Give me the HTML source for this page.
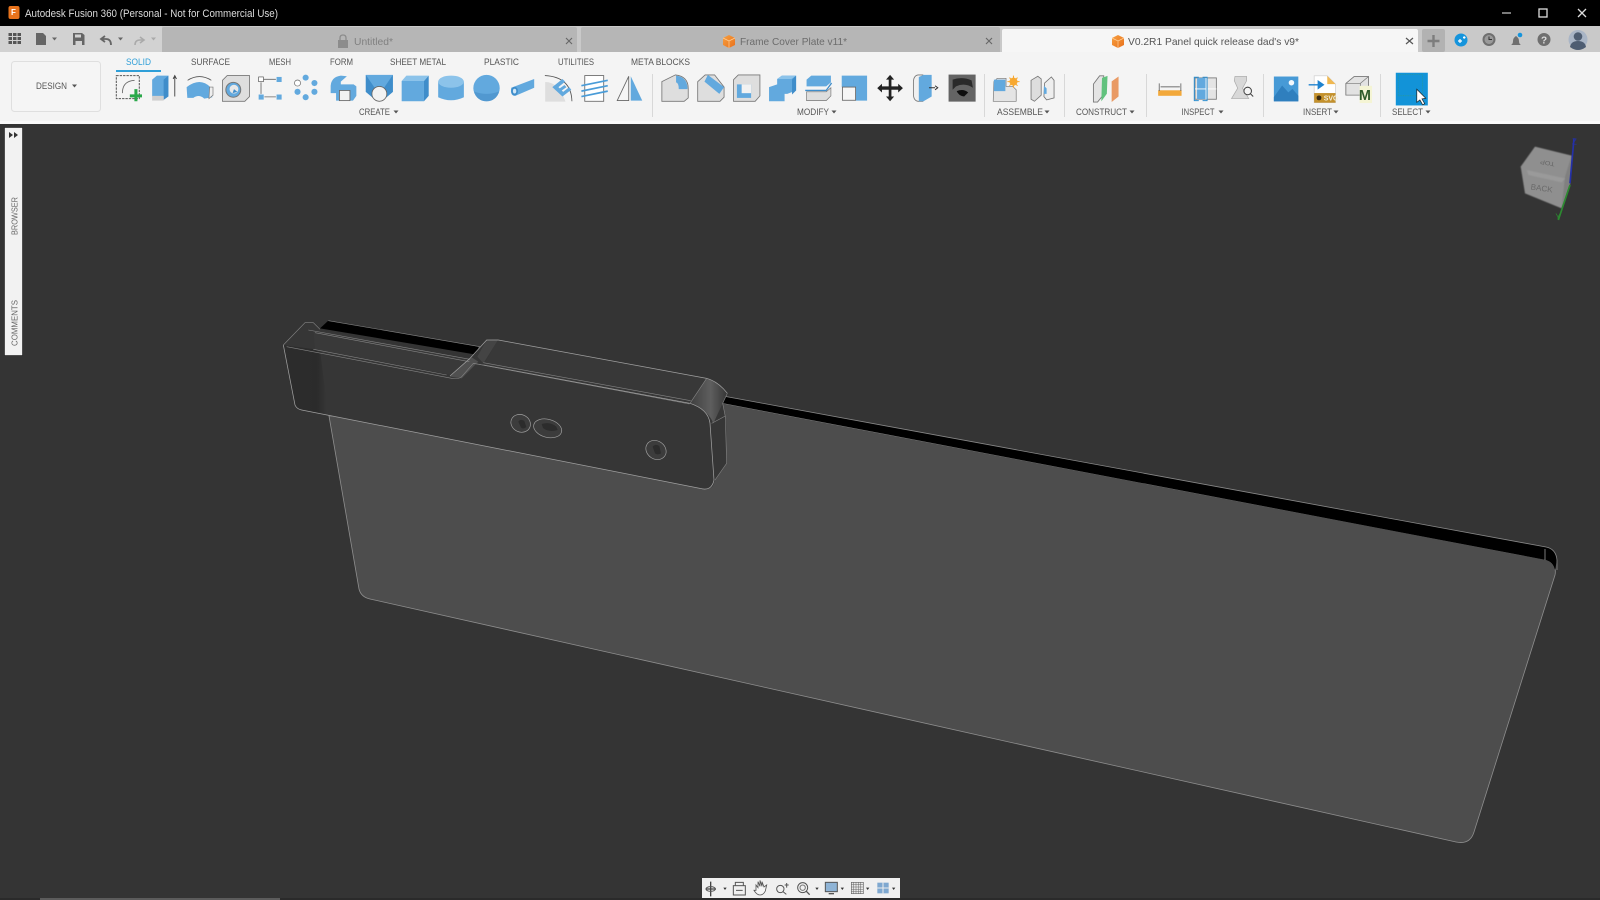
<!DOCTYPE html>
<html><head><meta charset="utf-8"><title>Autodesk Fusion 360</title>
<style>
html,body{margin:0;padding:0;width:1600px;height:900px;overflow:hidden;background:#343434}
svg{display:block;position:absolute;left:0;top:0;filter:blur(.35px)}
text{font-family:"Liberation Sans",sans-serif}
.t{font-size:9.5px;fill:#555}
.g{stroke:#777;stroke-width:2.5;fill:#dedede}
.b{fill:#62a9de}.d{fill:#3f8dca}.l{fill:#8cc3ea}
.e{fill:none;stroke:#a0a0a0;stroke-width:2.2}
.e2{fill:none;stroke:#858585;stroke-width:1.8}
</style></head><body>
<svg width="1600" height="900" viewBox="0 0 1600 900" xmlns="http://www.w3.org/2000/svg">
<defs>
<linearGradient id="endg" x1="0" x2="1" y1="0" y2="0"><stop offset="0" stop-color="#2d2d2d"/><stop offset=".75" stop-color="#2b2b2b"/><stop offset="1" stop-color="#383838"/></linearGradient>
<linearGradient id="fil" x1="0" x2="1" y1="0" y2="0"><stop offset="0" stop-color="#3f3f3f"/><stop offset=".55" stop-color="#5e5e5e"/><stop offset="1" stop-color="#363636"/></linearGradient>
<linearGradient id="cube" x1="0" x2="1" y1="0" y2="1"><stop offset="0" stop-color="#f7a040"/><stop offset="1" stop-color="#e8701c"/></linearGradient>
<filter id="soft"><feGaussianBlur stdDeviation="1.8"/></filter>
</defs>
<rect width="1600" height="900" fill="#343434"/>
<rect width="1600" height="26" fill="#000"/>
<rect y="26" width="1600" height="26" fill="#c9c9c9"/>
<rect y="26" width="162" height="26" fill="#d2d2d2"/>
<rect y="52" width="1600" height="69" fill="#f4f4f4"/>
<rect y="121" width="1600" height="3" fill="#fafafa"/>
<!-- title bar -->
<rect x="8.500" y="6" width="11" height="13" rx="2" fill="#e8731c"/><text x="11" y="15" font-size="8" font-weight="bold" fill="#fff">F</text>
<text x="25" y="17" font-size="11" fill="#dcdcdc" textLength="253" lengthAdjust="spacingAndGlyphs">Autodesk Fusion 360 (Personal - Not for Commercial Use)</text>
<path d="M1502 13h9" stroke="#bbb" stroke-width="1.300"/>
<rect x="1539" y="9" width="8" height="8" fill="none" stroke="#ddd" stroke-width="1.300"/>
<path d="M1578 9l8 8M1586 9l-8 8" stroke="#ddd" stroke-width="1.300"/>
<!-- tabs -->
<g transform="translate(0,-1)">
<path d="M162 53V30q0-2 2-2H575q2 0 2 2V53Z" fill="#b6b6b6"/>
<path d="M581 53V30q0-2 2-2H998q2 0 2 2V53Z" fill="#b6b6b6"/>
<path d="M1002 53V32q0-2 2-2H1416q2 0 2 2V53Z" fill="#f6f6f6"/>
<rect x="1422" y="30" width="23" height="23" rx="2" fill="#b2b2b2"/>
<path d="M1433.500 36v12M1427.500 42h12" stroke="#7d7d7d" stroke-width="2.400"/>
<rect x="338" y="41" width="10" height="8" fill="#8c8c8c"/><path d="M340 41v-2q0-3 3-3t3 3v2" fill="none" stroke="#8c8c8c" stroke-width="1.300"/>
<text x="354" y="46" font-size="10" fill="#808080" textLength="39" lengthAdjust="spacingAndGlyphs">Untitled*</text>
<path d="M566 39l6 6M572 39l-6 6" stroke="#666" stroke-width="1.100"/>
<path d="M729 36l6 3v7l-6 3-6-3v-7z" fill="url(#cube)"/><path d="M723 39l6 3 6-3M729 42v7" stroke="#ffd09a" stroke-width=".7" fill="none"/>
<text x="740" y="46" font-size="10.500" fill="#6c6c6c" textLength="107" lengthAdjust="spacingAndGlyphs">Frame Cover Plate v11*</text>
<path d="M986 39l6 6M992 39l-6 6" stroke="#666" stroke-width="1.100"/>
<path d="M1118 36l6 3v7l-6 3-6-3v-7z" fill="url(#cube)"/><path d="M1112 39l6 3 6-3M1118 42v7" stroke="#ffd09a" stroke-width=".7" fill="none"/>
<text x="1128" y="46" font-size="10.500" fill="#555" textLength="171" lengthAdjust="spacingAndGlyphs">V0.2R1 Panel quick release dad's v9*</text>
<path d="M1406 39l7 6M1413 39l-7 6" stroke="#555" stroke-width="1.200"/>
<!-- top right icons -->
<circle cx="1461" cy="41" r="6.500" fill="#1594dc"/><path d="M1458 42h4M1460 40v4M1463 38.500h2.500M1464.200 37.300v2.500" stroke="#fff" stroke-width="1.200"/>
<circle cx="1489" cy="40.500" r="6.500" fill="#6f6f6f"/><circle cx="1489" cy="40.500" r="4.500" fill="#9a9a9a"/><path d="M1489 37.500v3h3" stroke="#333" fill="none"/>
<path d="M1511 46q2-1 2-4t3-5q3 2 3 5t2 4z" fill="#6f6f6f"/><circle cx="1520" cy="36" r="2.300" fill="#1594dc"/>
<circle cx="1544" cy="40.500" r="6.500" fill="#6f6f6f"/><text x="1541" y="44.500" font-size="10" font-weight="bold" fill="#ddd">?</text>
<circle cx="1578" cy="40.500" r="9.500" fill="#a9b5c6"/><circle cx="1578" cy="37.500" r="4.300" fill="#4e5d72"/><path d="M1570 48q1-6 8-6t8 6q-4 3-8 3t-8-3z" fill="#4e5d72"/>
</g>
<!-- quick access -->
<g>
<g fill="#555"><rect x="8.500" y="33" width="3.500" height="3"/><rect x="13" y="33" width="3.500" height="3"/><rect x="17.500" y="33" width="3.500" height="3"/><rect x="8.500" y="37" width="3.500" height="3"/><rect x="13" y="37" width="3.500" height="3"/><rect x="17.500" y="37" width="3.500" height="3"/><rect x="8.500" y="41" width="3.500" height="3"/><rect x="13" y="41" width="3.500" height="3"/><rect x="17.500" y="41" width="3.500" height="3"/></g>
<path d="M36 33h7l3 3v9H36z" fill="#666"/><path d="M52 37.500h5l-2.500 3z" fill="#666"/>
<path d="M73 33h9l2.500 2v10H73z" fill="#666"/><rect x="75" y="34.500" width="6" height="3" fill="#d2d2d2"/><rect x="75.500" y="41" width="6.500" height="4" fill="#d2d2d2"/>
<path d="M111 45q0-6-5-6h-4M105 36l-4 3 4 3" fill="none" stroke="#666" stroke-width="1.800"/><path d="M118 37.500h5l-2.500 3z" fill="#666"/>
<path d="M135 45q0-5 5-5h3M140 37l4 3-4 3" fill="none" stroke="#aaa" stroke-width="1.600"/><path d="M151 37.500h5l-2.500 3z" fill="#aaa"/>
</g>
<!-- design box -->
<rect x="11.500" y="61.500" width="89" height="50" rx="3" fill="#f5f5f5" stroke="#dfdfdf"/>
<text x="36" y="89" font-size="9.500" fill="#555" textLength="31" lengthAdjust="spacingAndGlyphs">DESIGN</text>
<path d="M72 84.500h5l-2.500 3z" fill="#555"/>
<!-- tab labels -->
<text x="126" y="65" class="t" style="fill:#2f9fd8" textLength="25" lengthAdjust="spacingAndGlyphs">SOLID</text>
<rect x="116" y="70" width="45" height="2" fill="#2f9fd8"/>
<text x="191" y="65" class="t" textLength="39" lengthAdjust="spacingAndGlyphs">SURFACE</text>
<text x="269" y="65" class="t" textLength="22" lengthAdjust="spacingAndGlyphs">MESH</text>
<text x="330" y="65" class="t" textLength="23" lengthAdjust="spacingAndGlyphs">FORM</text>
<text x="390" y="65" class="t" textLength="56" lengthAdjust="spacingAndGlyphs">SHEET METAL</text>
<text x="484" y="65" class="t" textLength="35" lengthAdjust="spacingAndGlyphs">PLASTIC</text>
<text x="558" y="65" class="t" textLength="36" lengthAdjust="spacingAndGlyphs">UTILITIES</text>
<text x="631" y="65" class="t" textLength="59" lengthAdjust="spacingAndGlyphs">META BLOCKS</text>
<!-- group labels -->
<text x="359" y="115" class="t" textLength="31" lengthAdjust="spacingAndGlyphs">CREATE</text><path d="M393.500 110.500h5l-2.500 3z" fill="#555"/>
<text x="797" y="115" class="t" textLength="32" lengthAdjust="spacingAndGlyphs">MODIFY</text><path d="M831.500 110.500h5l-2.500 3z" fill="#555"/>
<text x="997" y="115" class="t" textLength="46" lengthAdjust="spacingAndGlyphs">ASSEMBLE</text><path d="M1044.500 110.500h5l-2.500 3z" fill="#555"/>
<text x="1076" y="115" class="t" textLength="51" lengthAdjust="spacingAndGlyphs">CONSTRUCT</text><path d="M1129.500 110.500h5l-2.500 3z" fill="#555"/>
<text x="1181.500" y="115" class="t" textLength="33" lengthAdjust="spacingAndGlyphs">INSPECT</text><path d="M1218.500 110.500h5l-2.500 3z" fill="#555"/>
<text x="1303" y="115" class="t" textLength="29" lengthAdjust="spacingAndGlyphs">INSERT</text><path d="M1333.500 110.500h5l-2.500 3z" fill="#555"/>
<text x="1392" y="115" class="t" textLength="31" lengthAdjust="spacingAndGlyphs">SELECT</text><path d="M1425.500 110.500h5l-2.500 3z" fill="#555"/>
<!-- separators -->
<path d="M652.500 74v43M984.500 74v43M1064.500 74v43M1146.500 74v43M1263.500 74v43M1380.500 74v43" stroke="#d8d8d8"/>
<!-- icons section 1 -->
<g transform="translate(0,-1.500) scale(.3381)">
<rect x="344" y="228" width="68" height="68" fill="none" stroke="#555" stroke-width="3" stroke-dasharray="7 3"/>
<path d="M362 280q0-36 36-38" fill="none" stroke="#666" stroke-width="2.500"/>
<path d="M402 268v36M384 288h36" stroke="#2aa84a" stroke-width="9"/>
<path d="M450 240l14-12h34v62l-14 0H450z" class="b"/><path d="M484 240l14-12v62l-14 10z" class="d"/><rect x="450" y="288" width="34" height="14" fill="#cfcfcf"/>
<path d="M517 290v-58M512 238l5-10 5 10" stroke="#333" stroke-width="2.500" fill="none"/>
<path d="M552 262q40-30 70 0l6 30-24 4q-16-14-32-2l-18 0z" class="b"/><path d="M620 262l10 0v24l-12 10z" fill="#eee" stroke="#777" stroke-width="2"/><path d="M555 242q35-22 70 0" fill="none" stroke="#555" stroke-width="2.500"/>
<path d="M658 242l14-14h66v62l-14 14h-66z" class="g"/><circle cx="690" cy="270" r="22" class="b" stroke="#777" stroke-width="3"/><circle cx="692" cy="268" r="13" fill="#e8e8e8"/><path d="M692 268l10 8-14 4z" class="d"/>
<rect x="765" y="232" width="14" height="14" fill="#fff" stroke="#555" stroke-width="2"/><rect x="818" y="232" width="15" height="15" class="b"/><rect x="765" y="284" width="15" height="15" class="b"/><rect x="818" y="284" width="15" height="15" class="b"/><path d="M780 239h36M772 248v34M782 291h34" stroke="#666" stroke-width="2.500"/>
<circle cx="880" cy="250" r="9" fill="#fff" stroke="#666" stroke-width="2"/><circle cx="904" cy="234" r="9" class="b"/><circle cx="930" cy="250" r="9" class="b"/><circle cx="930" cy="276" r="9" class="b"/><circle cx="904" cy="292" r="9" class="b"/><circle cx="880" cy="276" r="9" class="b"/>
<path d="M978 258q2-26 30-30l18 2-18 16v8h38l8 6v28l-10 14h-50v-22h-16z" class="b"/><rect x="1004" y="272" width="31" height="30" fill="#f2f2f2" stroke="#666" stroke-width="2.500"/>
<path d="M1082 226h80v50l-28 24h-24l-28-24z" class="b"/><path d="M1082 226l30 44-4 28-26-22z M1162 226l-30 44 4 28 26-22z" class="d"/><circle cx="1122" cy="282" r="22" fill="#f2f2f2" stroke="#666" stroke-width="2.500"/>
<path d="M1188 244l14-16h66l-14 16z" class="l"/><path d="M1188 244h66v60h-66z" class="b"/><path d="M1254 244l14-16v60l-14 16z" class="d"/>
<path d="M1296 246v46q38 18 76 0v-46z" class="b"/><ellipse cx="1334" cy="246" rx="38" ry="18" class="l"/>
<circle cx="1439" cy="265" r="39" class="b"/><path d="M1402 275q37 14 74 0q-8 28-37 29q-29-1-37-29z" fill="#5198d0"/>
<path d="M1512 264l68-26v26l-56 24q-16 0-12-24z" class="b"/><ellipse cx="1522" cy="274" rx="10" ry="13" class="d"/><ellipse cx="1522" cy="274" rx="5" ry="7" fill="#d0e6f6"/>
</g>
<!-- icons section 2 -->
<g transform="translate(530,-1.500) scale(.3381)">
<path d="M45 305v-58q40 0 60 58z" fill="#dedede"/><path d="M44 228q78 4 80 76" fill="none" stroke="#555" stroke-width="2.500"/>
<path d="M66 262l30-24 8 8-20 16 4 4 14-10 6 6-14 10 4 4 18-14 6 8-26 20z" class="b"/>
<rect x="162" y="228" width="56" height="76" fill="#fff" stroke="#666" stroke-width="2.500"/><path d="M152 258l78-16M152 274l78-16M152 290l78-16" stroke="#4a9cd8" stroke-width="5"/>
<path d="M258 302l34-72v72z" fill="#f5f5f5" stroke="#666" stroke-width="2.500"/><path d="M298 230l34 72h-34z" class="b"/>
<path d="M390 246l40-20q38 4 38 40v28l-12 10h-66z" fill="#dedede" stroke="#777" stroke-width="2.500"/><path d="M432 228q34 4 34 40l-26 0q0-18-8-20z" class="b"/>
<path d="M496 246l22-20h28l28 36v30l-12 12h-66z" fill="#dedede" stroke="#777" stroke-width="2.500"/><path d="M526 226l48 36-14 20-44-36z" class="b"/>
<path d="M602 240l14-14h64v62l-14 16h-64z" class="g"/><path d="M612 254h42v40h-42z" class="b"/><path d="M626 254h28v26h-28z" fill="#f2f2f2"/>
<path d="M707 262l24-8v-16l14-10h42v44l-26 10h-8v22h-46z" class="b"/><path d="M731 238l14-10h42l-14 10z" class="l"/><path d="M775 240l12-12v44l-12 12z" class="d"/>
<path d="M818 240l14-12h58v20l-14 12h-58z" class="b"/><path d="M818 276h58l14-12v24l-14 14h-58z" fill="#dedede" stroke="#777" stroke-width="2"/><path d="M814 272h62l16-22" fill="none" stroke="#3f8dca" stroke-width="4"/>
<path d="M922 228h75v74h-34v-40h-41z" class="b"/><rect x="924" y="262" width="39" height="39" fill="#f6f6f6" stroke="#666" stroke-width="2.500"/>
<path d="M1065 226l-12 14h8v20h-20v-8l-14 13 14 13v-8h20v20h-8l12 14 12-14h-8v-20h20v8l14-13-14-13v8h-20v-20h8z" fill="#222"/>
<path d="M1134 248q0-20 14-22h14v78h-14q-14-2-14-22z" fill="#f0f0f0" stroke="#777" stroke-width="2.500"/><path d="M1150 232l14-6h24v64l-24 14h-14z" class="b"/><path d="M1180 264h18M1198 258l8 6-8 6" stroke="#333" stroke-width="3" fill="none"/>
<rect x="1238" y="225" width="80" height="80" fill="#646464"/><path d="M1250 240q28-10 56 2l4 22q-24-16-50-4l-10 10z" fill="#2a2a2a"/><path d="M1262 274q20-8 34 4l-12 12q-16-2-22-16z" fill="#0e0e0e"/>
<path d="M1372 246l10-10h26v24h20l10 10v34h-68z" fill="#e4e4e4" stroke="#777" stroke-width="2"/><rect x="1372" y="240" width="34" height="34" class="b"/>
<circle cx="1430" cy="246" r="12" fill="#f7a830"/><path d="M1430 228v36M1412 246h36M1418 234l24 24M1442 234l-24 24" stroke="#f7a830" stroke-width="3"/>
<path d="M1482 298v-56l20-12 10 8v48l-20 18z" fill="#ddd" stroke="#777" stroke-width="2.500"/><path d="M1522 250l20-18 8 10v52l-22 6-8-10z" fill="#eee" stroke="#777" stroke-width="2.500"/><path d="M1520 258l8 8v16h-8z" class="b"/>
</g>
<!-- icons section 3 -->
<g transform="translate(1060,-2) scale(.3444)">
<path d="M97 250l18-24h12v54l-18 22h-12z" fill="#e4e4e4" stroke="#777" stroke-width="2.500"/><path d="M122 232l16-6-2 52-16 22z" fill="#62c27e"/><path d="M150 242l20-14v58l-20 16z" fill="#e99a64"/>
<rect x="285" y="268" width="68" height="16" fill="#f2a83a"/><path d="M288 270v-22M351 270v-22M292 258h56" stroke="#444" stroke-width="2"/>
<rect x="392" y="232" width="62" height="62" fill="#e4e4e4" stroke="#777" stroke-width="2.500"/><rect x="398" y="232" width="26" height="62" class="b"/><path d="M424 232v62M392 264h62" stroke="#fff" stroke-width="2.500"/><path d="M403 230h-13v68h13M414 230h13v68h-13" fill="none" stroke="#2f8fd0" stroke-width="3"/>
<path d="M508 228h34v12l-12 22 18 30H498l18-30-10-22z" fill="#d8d8d8" stroke="#aaa" stroke-width="2"/><circle cx="545" cy="270" r="11" fill="#f4f4f4" stroke="#444" stroke-width="3"/><path d="M553 278l8 8" stroke="#444" stroke-width="3"/>
<rect x="621" y="228" width="71" height="72" fill="#479ad6"/><circle cx="672" cy="246" r="8" fill="#f4f8fc"/><path d="M621 288l24-34 18 20 12-10 17 20v16h-71z" fill="#2f7fbe"/>
<path d="M738 226h38l24 24v54H738z" fill="#fff" stroke="#ccc" stroke-width="2"/><path d="M776 226l24 24h-24z" fill="#f0b850"/><rect x="738" y="276" width="62" height="28" fill="#c4912c"/><text x="766" y="298" font-size="20" font-weight="bold" fill="#f4f0e0">SVG</text><circle cx="752" cy="290" r="7" fill="#3a2a10"/><path d="M722 250h26v-12l20 14-20 14v-12h-26z" fill="#1f83cf"/>
<path d="M830 248l24-20h42v54H830z" fill="#e2e2e2" stroke="#777" stroke-width="2.500"/><path d="M830 248h42l24-20M872 248v34" fill="none" stroke="#777" stroke-width="2"/><rect x="870" y="255" width="36" height="50" fill="#f4f4d4"/><text x="868" y="296" font-size="42" font-weight="bold" fill="#2f5c2a">M</text>
<rect x="975" y="217" width="93" height="95" fill="#1293d8"/><rect x="982" y="222" width="70" height="62" fill="none" stroke="#2f9a8a" stroke-width="1.500" stroke-dasharray="3 2"/>
<path d="M1036 265v38l9-7 8 14 6-3-8-14 11-2z" fill="#fff" stroke="#222" stroke-width="2"/>
</g>
<!-- 3D plate -->
<path d="M329 416L359 589Q361 597 370 599L1456 842Q1470 845 1474 832L1555 575Q1557 566 1548 560L722 403Z" fill="#4d4d4d" stroke="#8e8e8e" stroke-width=".8"/>
<path d="M723 396L1546 547Q1556 549 1557 560L1555 570Q1553 562 1546 560L722 403Z" fill="#000"/>
<path d="M723 396L1546 547Q1556 549 1557 560V570" fill="none" stroke="#888" stroke-width=".8"/>
<path d="M1545 549V560" stroke="#999" stroke-width=".8"/>
<!-- body -->
<g transform="translate(270,310) scale(.33333)">
<path d="M150 55L175 32 625 110 625 135Z" fill="#000"/>
<path d="M175 32L630 110" class="e2"/>
<path d="M40 105L105 38H130L150 58 600 148 650 90 685 88 1310 205Q1345 215 1372 250L1358 280 1368 330 1370 460 1335 510 1330 525Q1325 540 1290 535L95 300Q80 297 75 285Z" fill="#363636"/>
<path d="M40 105L75 285Q80 297 95 300L175 315 150 120Z" fill="url(#endg)"/>
<path d="M130 60L600 148 575 200 135 118Z" fill="#393939"/>
<path d="M685 88L1310 205 1260 280 640 165Z" fill="#383838"/>
<path d="M1310 205Q1345 215 1372 250L1358 280 1330 340Q1315 300 1260 280Z" fill="url(#fil)"/>
<path d="M540 200L605 142 625 155 575 205Z" fill="#505050"/>
<path d="M622 140L650 90 685 88 640 160Z" fill="#444"/>
<path d="M40 105L75 285Q80 297 95 300L1290 535Q1325 545 1332 510L1320 340Q1315 298 1260 280L640 165" class="e"/>
<path d="M40 105L105 38H130L150 58M115 60L600 148M135 68L598 155" class="e2"/>
<path d="M50 110L535 203Q565 210 575 200L610 160 640 165M130 118L530 195" class="e2"/>
<path d="M540 198L600 145 650 90H685L1310 205Q1345 215 1372 250" class="e"/>
<path d="M640 158L1262 272M610 160L1258 282" class="e2"/>
<path d="M1310 205L1260 280M1372 250L1358 280 1366 320 1370 460 1335 510M1325 340L1366 318" class="e2"/>
<g fill="#3c3c3c" stroke="#a0a0a0" stroke-width="2">
<ellipse cx="752" cy="340" rx="30" ry="26" transform="rotate(25 752 340)"/>
<ellipse cx="833" cy="355" rx="43" ry="27" transform="rotate(15 833 355)"/>
<ellipse cx="1158" cy="420" rx="32" ry="27" transform="rotate(35 1158 420)"/>
</g>
<path d="M745 335q6-10 18-2l6 18q-8 8-16 2z M815 342q26-8 44 8l4 10q-26 8-44-6z M1148 410q8-10 20-2l5 22q-10 6-18 0z" fill="#2c2c2c"/>
</g>
<!-- left panel -->
<rect x="4.500" y="127.500" width="18" height="228" fill="#f2f2f2" stroke="#222" stroke-width=".6"/>
<path d="M9 132l4 3-4 3zM14 132l4 3-4 3z" fill="#333"/>
<text transform="translate(17.500,235) rotate(-90)" font-size="8.500" fill="#666" textLength="38" lengthAdjust="spacingAndGlyphs">BROWSER</text>
<text transform="translate(17.500,346) rotate(-90)" font-size="8.500" fill="#666" textLength="46" lengthAdjust="spacingAndGlyphs">COMMENTS</text>
<!-- view cube -->
<g transform="translate(1490,125) scale(.33333)">
<path d="M92 125L135 65 245 92 240 175 215 250 105 205Z" fill="#8f8f8f" filter="url(#soft)"/>
<path d="M225 155L245 92 240 175 215 250Z" fill="#808080" filter="url(#soft)"/>
<path d="M110 135L225 160 215 172 115 150Z" fill="#9a9a9a" filter="url(#soft)"/>
<path d="M240 175L252 40" stroke="#2430a8" stroke-width="5"/>
<path d="M240 180L205 285" stroke="#2c8a30" stroke-width="5"/>
<text x="122" y="198" font-size="24" fill="#6a6a6a" textLength="66" lengthAdjust="spacingAndGlyphs" transform="rotate(8 155 190)">BACK</text>
<text transform="translate(195,112) rotate(190)" font-size="18" fill="#666" textLength="44" lengthAdjust="spacingAndGlyphs">TOP</text>
<text x="246" y="58" font-size="24" fill="#2430a8">Z</text>
<text x="196" y="284" font-size="24" fill="#2c8a30">Y</text>
</g>
<!-- nav bar -->
<rect x="702" y="878" width="198" height="20" fill="#f0f0f0"/>
<g transform="translate(680,865) scale(.33333)">
<path d="M92 50v44M78 72h30" stroke="#444" stroke-width="4"/><ellipse cx="92" cy="72" rx="14" ry="7" fill="none" stroke="#555" stroke-width="3"/>
<path d="M130 68h10l-5 7z" fill="#333"/>
<rect x="160" y="62" width="36" height="28" fill="none" stroke="#555" stroke-width="3"/><path d="M166 62v-10h24v10M168 76h20" stroke="#555" stroke-width="3" fill="none"/>
<path d="M228 76v-16l6 8V50l6 14V46l6 18V50l6 16 8-6-4 18q-6 12-16 12-10 0-18-14z" fill="#f6f6f6" stroke="#555" stroke-width="2.500"/>
<circle cx="301" cy="72" r="11" fill="none" stroke="#555" stroke-width="3"/><path d="M309 80l10 8M320 54v14M314 60h12" stroke="#555" stroke-width="3"/>
<circle cx="368" cy="68" r="15" fill="none" stroke="#555" stroke-width="3"/><circle cx="368" cy="68" r="8" fill="none" stroke="#777" stroke-width="3"/><path d="M379 79l10 10" stroke="#555" stroke-width="4"/>
<path d="M406 68h10l-5 7z" fill="#333"/>
<rect x="436" y="52" width="36" height="28" fill="#8fb4d6" stroke="#555" stroke-width="3"/><path d="M446 86h16" stroke="#555" stroke-width="4"/>
<path d="M482 68h10l-5 7z" fill="#333"/>
<rect x="514" y="52" width="36" height="34" fill="#e8e8e8" stroke="#666" stroke-width="2"/><path d="M521 52v34M528 52v34M535 52v34M542 52v34M514 59h36M514 66h36M514 73h36M514 80h36" stroke="#666" stroke-width="1.500"/>
<path d="M558 68h10l-5 7z" fill="#333"/>
<rect x="592" y="53" width="34" height="32" fill="#7fa8d0"/><path d="M609 53v32M592 69h34" stroke="#eee" stroke-width="3"/>
<path d="M636 68h10l-5 7z" fill="#333"/>
</g>
<rect y="898" width="1600" height="2" fill="#2a2a2a"/>
<rect x="40" y="898" width="240" height="2" fill="#5c5c5c"/>
</svg>
</body></html>
